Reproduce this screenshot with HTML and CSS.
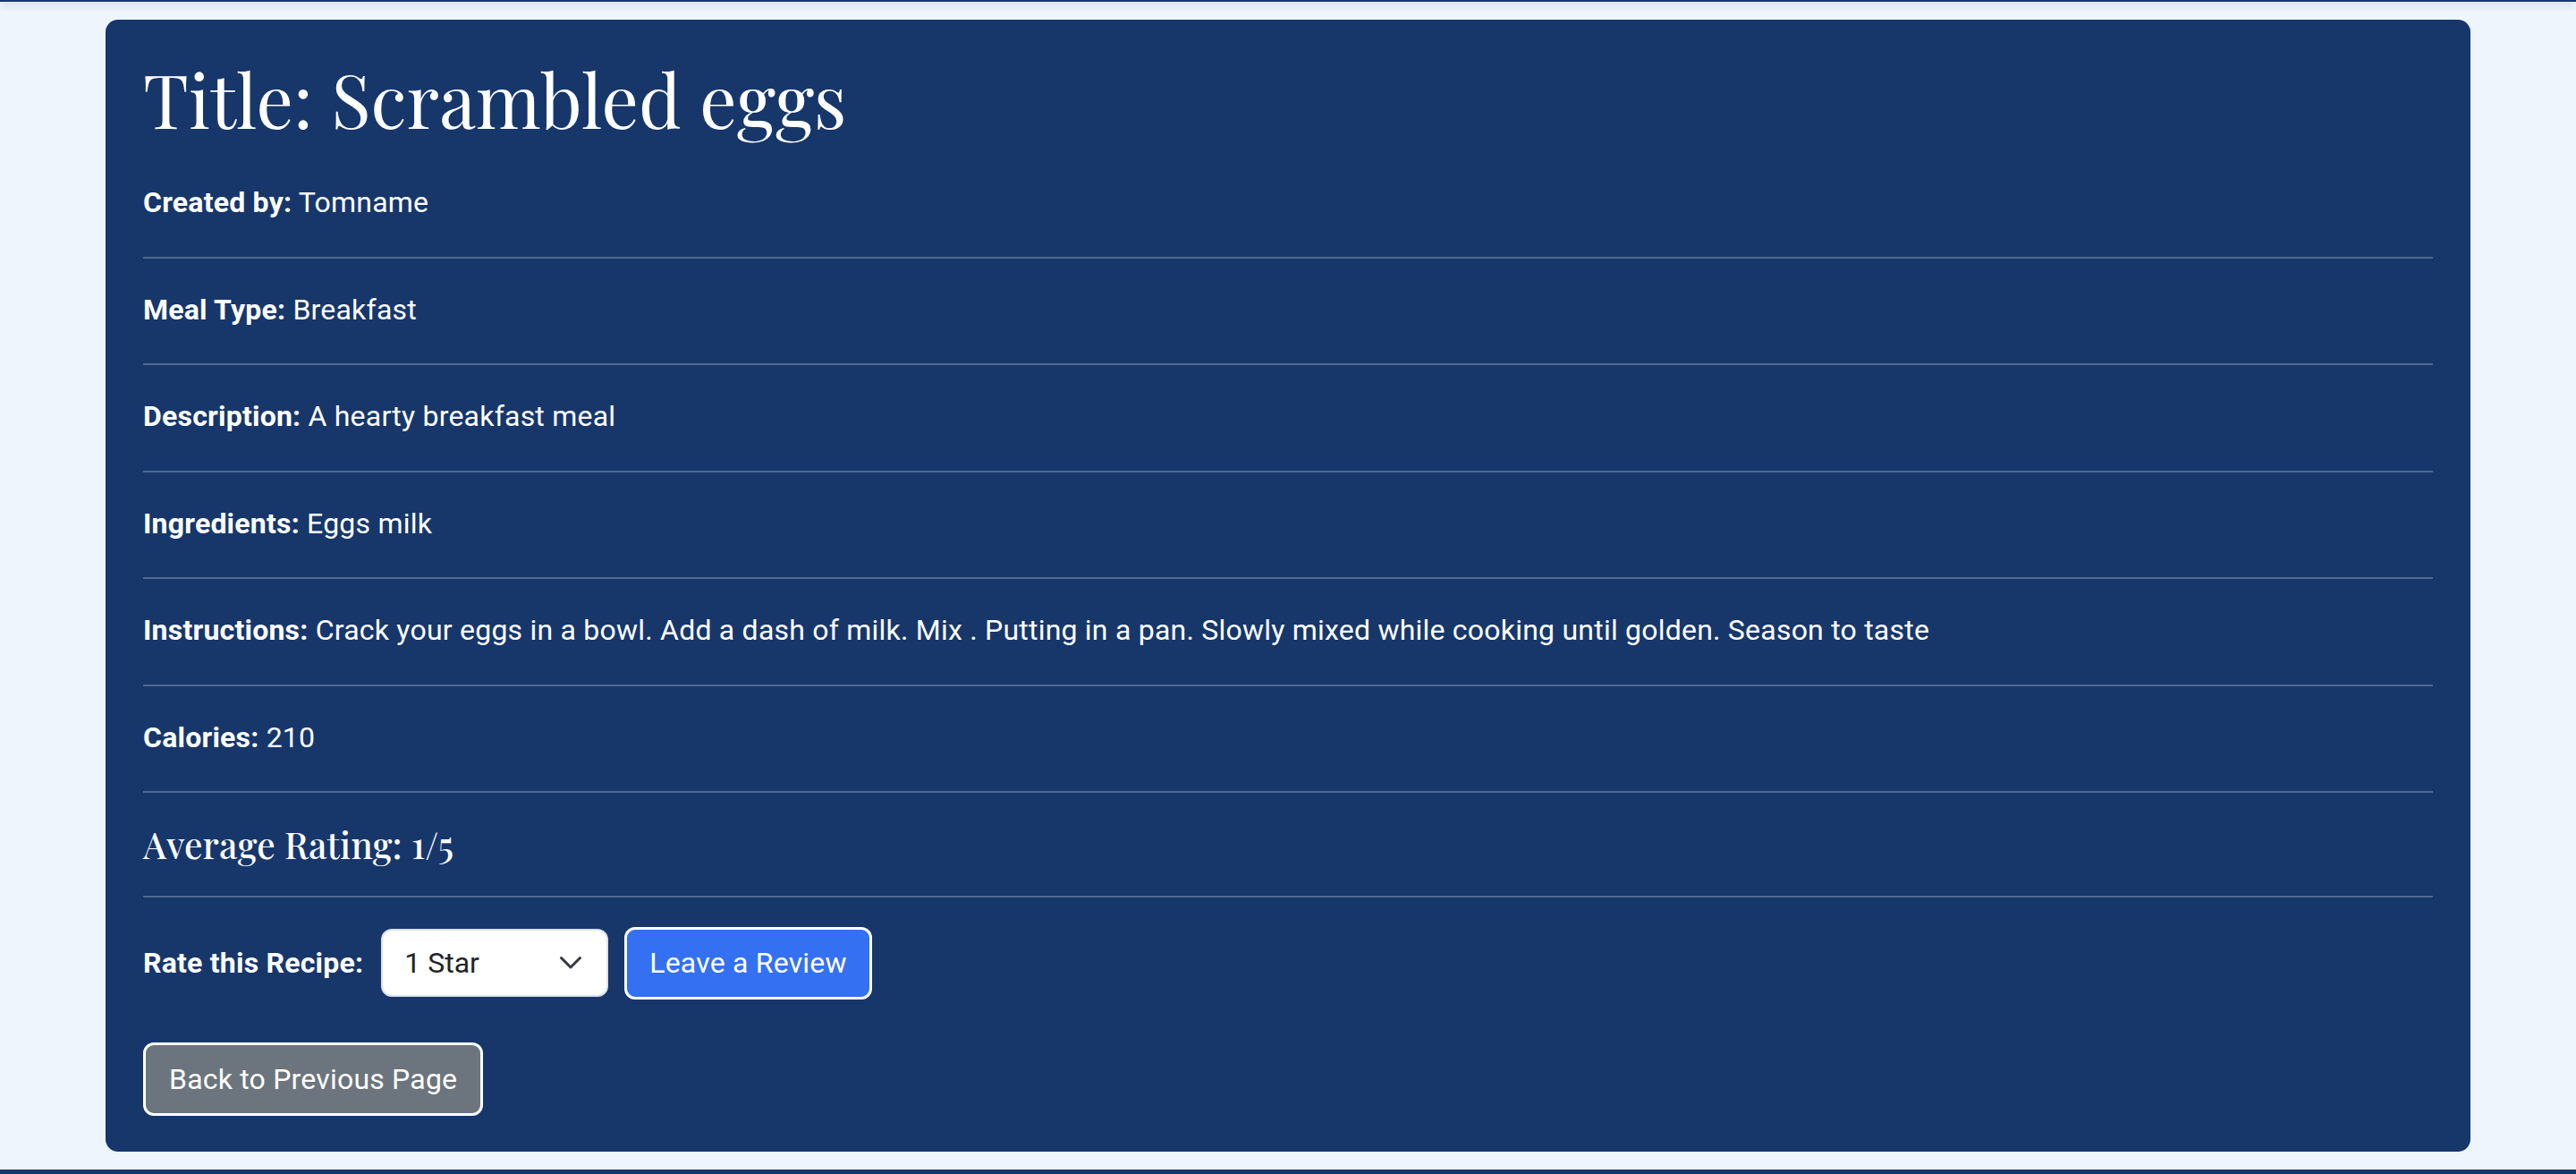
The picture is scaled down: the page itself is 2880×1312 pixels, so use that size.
FILE: index.html
```html
<!DOCTYPE html>
<html lang="en">
<head>
  <meta charset="UTF-8" />
  <meta name="viewport" content="width=device-width, initial-scale=1.0" />
  <title>Scrambled eggs - Recipe</title>
  <link rel="stylesheet" href="styles.css">
</head>
<body>
  <div class="topbar"></div>

  <div class="recipe-card">
    <h1 class="recipe-title">Title: Scrambled eggs</h1>

    <p class="field"><strong>Created by:</strong> Tomname</p>
    <hr>
    <p class="field"><strong>Meal Type:</strong> Breakfast</p>
    <hr>
    <p class="field"><strong>Description:</strong> A hearty breakfast meal</p>
    <hr>
    <p class="field"><strong>Ingredients:</strong> Eggs milk</p>
    <hr>
    <p class="field"><strong>Instructions:</strong> Crack your eggs in a bowl. Add a dash of milk. Mix . Putting in a pan. Slowly mixed while cooking until golden. Season to taste</p>
    <hr>
    <p class="field"><strong>Calories:</strong> 210</p>
    <hr>
    <h5 class="avg-rating">Average Rating: 1/5</h5>
    <hr class="rule-tight">

    <form class="rate-row" onsubmit="return false;">
      <label for="rating" class="rate-label">Rate this Recipe:</label>
      <div class="select-wrap">
        <select id="rating" class="rate-select">
          <option>1 Star</option>
          <option>2 Stars</option>
          <option>3 Stars</option>
          <option>4 Stars</option>
          <option>5 Stars</option>
        </select>
        <svg class="chevron" width="24" height="24" viewBox="0 0 24 24">
          <path d="M1.5 6.5 L12 17 L22.5 6.5" fill="none" stroke="#343a40" stroke-width="3" stroke-linecap="round" stroke-linejoin="round"/>
        </svg>
      </div>
      <button type="submit" class="btn btn-primary">Leave a Review</button>
    </form>

    <button class="btn btn-secondary back-btn" onclick="history.back()">Back to Previous Page</button>
  </div>

  <footer class="footer"></footer>
</body>
</html>
```

FILE: styles.css
```css
body {
  margin: 0;
  background: #eef5fd;
  font-family: Roboto, "Liberation Sans", Arial, sans-serif;
  font-size: 32px;
  letter-spacing: 0.22px;
  color: #fff;
}
.topbar {
  height: 2px;
  background: #17376b;
  box-shadow: 0 2px 10px rgba(0,0,0,0.35);
  position: relative;
}
.recipe-card {
  width: 2644px;
  box-sizing: border-box;
  margin: 20px auto;
  padding: 39px 42px 40px;
  background: #17376b;
  border-radius: 14px;
  display: flex;
  flex-direction: column;
}
.recipe-title {
  font-family: "Playfair Display", "Liberation Serif", serif;
  font-weight: 400;
  font-size: 82px;
  line-height: 98px;
  letter-spacing: 0;
  margin: 0 0 43px;
}
.field {
  margin: 0;
  line-height: 48px;
}
.field strong {
  font-weight: 700;
}
hr {
  margin: 36.5px 0 33px;
  height: 0;
  border: 0;
  border-top: 2px solid rgba(255,255,255,0.25);
}
.avg-rating {
  font-family: "Playfair Display", "Liberation Serif", serif;
  font-weight: 500;
  font-size: 40.5px;
  line-height: 48px;
  letter-spacing: 0.2px;
  margin: 0;
}
.rule-tight {
  margin-top: 33.5px;
}
.rate-row {
  display: flex;
  align-items: center;
  margin: 0;
}
.rate-label {
  font-weight: 700;
  line-height: 48px;
  margin-right: 20px;
}
.select-wrap {
  position: relative;
  margin-right: 18px;
}
.rate-select {
  appearance: none;
  -webkit-appearance: none;
  width: 254px;
  height: 76px;
  padding: 0 60px 0 24px;
  font-family: Roboto, "Liberation Sans", Arial, sans-serif;
  font-size: 32px;
  color: #212529;
  background: #fff;
  border: 2px solid #dee2e6;
  border-radius: 12px;
  display: block;
}
.chevron {
  position: absolute;
  right: 30px;
  top: 26px;
  pointer-events: none;
}
.btn {
  font-family: Roboto, "Liberation Sans", Arial, sans-serif;
  font-size: 32px;
  line-height: 48px;
  letter-spacing: 0.2px;
  color: #fff;
  border: 3px solid #fff;
  border-radius: 12px;
  padding: 13.5px 25px;
  cursor: pointer;
}
.btn-primary {
  background: #3470f2;
}
.btn-secondary {
  background: #6c757d;
}
.back-btn {
  align-self: flex-start;
  margin-top: 48.5px;
  padding: 14px 26px;
}
.footer {
  height: 80px;
  background: #17376b;
}
```
